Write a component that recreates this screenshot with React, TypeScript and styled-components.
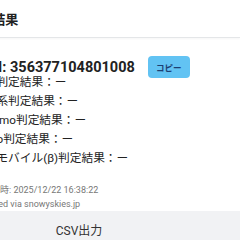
import React from "react";
import styled, { createGlobalStyle } from "styled-components";

const Global = createGlobalStyle`
  html, body { margin: 0; padding: 0; background: #fff; overflow: hidden; }
  body { font-family: Roboto, "Noto Sans CJK JP", sans-serif; color: #222; }
`;

const Modal = styled.div`
  width: 322px;
  margin-left: -82px;
  display: flex;
  flex-direction: column;
  background: #fff;
`;

const Header = styled.div`
  height: 37px;
  border-bottom: 1px solid #e4e6e8;
  box-shadow: 0 1px 2px rgba(0,0,0,0.04);
  display: flex;
  align-items: center;
  padding-left: 22px;
`;

const Title = styled.h2`
  margin: 0;
  font-size: 13px;
  font-weight: 700;
  color: #222;
  white-space: nowrap;
`;

const Body = styled.div`
  padding: 18px 0 0 55px;
  display: flex;
  flex-direction: column;
`;

const ImeiRow = styled.div`
  display: flex;
  align-items: center;
  gap: 13px;
  height: 22px;
`;

const Imei = styled.div`
  font-size: 14.5px;
  font-weight: 700;
  color: #222;
`;

const CopyButton = styled.button`
  border: none;
  background: #62c3f3;
  color: #1d3f73;
  border-radius: 4px;
  width: 42px;
  height: 22px;
  font-size: 8.5px;
  font-weight: 700;
  font-family: inherit;
  padding: 0;
`;

const Line = styled.div`
  font-size: 11.7px;
  line-height: 19px;
  color: #222;
  white-space: nowrap;
`;

const Lines = styled.div`
  margin-top: -5px;
  display: flex;
  flex-direction: column;
`;

const Meta = styled.div`
  margin-top: 15px;
  display: flex;
  flex-direction: column;
`;

const MetaLine = styled.div`
  font-size: 9px;
  line-height: 14px;
  color: #777;
  white-space: nowrap;
`;

const Footer = styled.div`
  height: 36px;
  background: #f1f2f4;
  display: flex;
  justify-content: center;
  padding-top: 10px;
  box-sizing: border-box;
`;

const FooterButton = styled.span`
  font-size: 12px;
  color: #333;
`;

export default function App() {
  return (
    <>
      <Global />
      <Modal>
        <Header>
          <Title>IMEI判定結果</Title>
        </Header>
        <Body>
          <ImeiRow>
            <Imei>IMEI: 356377104801008</Imei>
            <CopyButton>コピー</CopyButton>
          </ImeiRow>
          <Lines>
            <Line>総合判定結果：ー</Line>
            <Line>楽天系判定結果：ー</Line>
            <Line>docomo判定結果：ー</Line>
            <Line>irumo判定結果：ー</Line>
            <Line>楽天モバイル(β)判定結果：ー</Line>
          </Lines>
          <Meta>
            <MetaLine>取得日時: 2025/12/22 16:38:22</MetaLine>
            <MetaLine>Powered via snowyskies.jp</MetaLine>
          </Meta>
        </Body>
        <Footer>
          <FooterButton>CSV出力</FooterButton>
        </Footer>
      </Modal>
    </>
  );
}
